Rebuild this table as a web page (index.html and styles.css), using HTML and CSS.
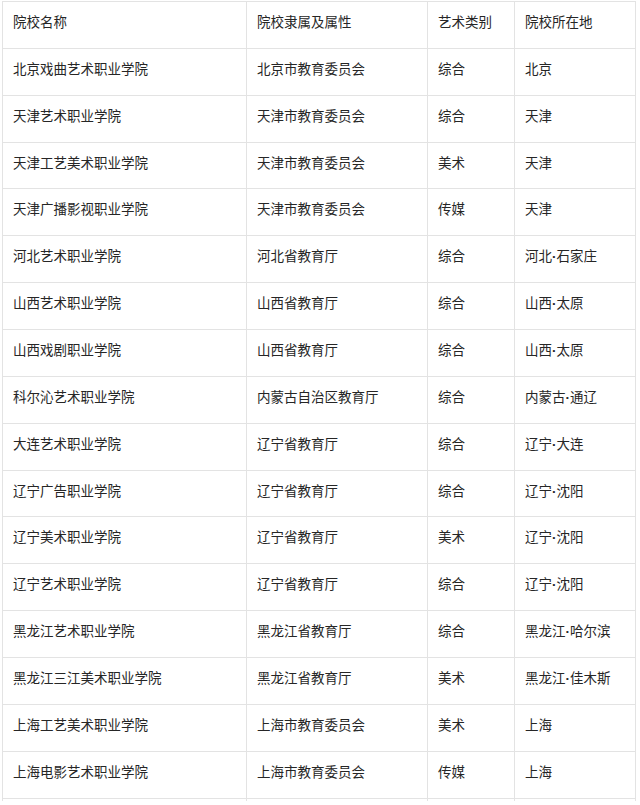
FILE: index.html
```html
<!DOCTYPE html>
<html lang="zh-CN">
<head>
<meta charset="utf-8">
<link rel="stylesheet" href="styles.css">
</head>
<body>
<table class="schools">
<colgroup>
<col class="c1"><col class="c2"><col class="c3"><col class="c4">
</colgroup>
<tbody>
<tr><td>院校名称</td><td>院校隶属及属性</td><td>艺术类别</td><td>院校所在地</td></tr>
<tr><td>北京戏曲艺术职业学院</td><td>北京市教育委员会</td><td>综合</td><td>北京</td></tr>
<tr><td>天津艺术职业学院</td><td>天津市教育委员会</td><td>综合</td><td>天津</td></tr>
<tr><td>天津工艺美术职业学院</td><td>天津市教育委员会</td><td>美术</td><td>天津</td></tr>
<tr><td>天津广播影视职业学院</td><td>天津市教育委员会</td><td>传媒</td><td>天津</td></tr>
<tr><td>河北艺术职业学院</td><td>河北省教育厅</td><td>综合</td><td>河北<span class="dot">·</span>石家庄</td></tr>
<tr><td>山西艺术职业学院</td><td>山西省教育厅</td><td>综合</td><td>山西<span class="dot">·</span>太原</td></tr>
<tr><td>山西戏剧职业学院</td><td>山西省教育厅</td><td>综合</td><td>山西<span class="dot">·</span>太原</td></tr>
<tr><td>科尔沁艺术职业学院</td><td>内蒙古自治区教育厅</td><td>综合</td><td>内蒙古<span class="dot">·</span>通辽</td></tr>
<tr><td>大连艺术职业学院</td><td>辽宁省教育厅</td><td>综合</td><td>辽宁<span class="dot">·</span>大连</td></tr>
<tr><td>辽宁广告职业学院</td><td>辽宁省教育厅</td><td>综合</td><td>辽宁<span class="dot">·</span>沈阳</td></tr>
<tr><td>辽宁美术职业学院</td><td>辽宁省教育厅</td><td>美术</td><td>辽宁<span class="dot">·</span>沈阳</td></tr>
<tr><td>辽宁艺术职业学院</td><td>辽宁省教育厅</td><td>综合</td><td>辽宁<span class="dot">·</span>沈阳</td></tr>
<tr><td>黑龙江艺术职业学院</td><td>黑龙江省教育厅</td><td>综合</td><td>黑龙江<span class="dot">·</span>哈尔滨</td></tr>
<tr><td>黑龙江三江美术职业学院</td><td>黑龙江省教育厅</td><td>美术</td><td>黑龙江<span class="dot">·</span>佳木斯</td></tr>
<tr><td>上海工艺美术职业学院</td><td>上海市教育委员会</td><td>美术</td><td>上海</td></tr>
<tr><td>上海电影艺术职业学院</td><td>上海市教育委员会</td><td>传媒</td><td>上海</td></tr>
<tr class="tail"><td></td><td></td><td></td><td></td></tr>
</tbody>
</table>
</body>
</html>
```
FILE: styles.css
```css
html, body {
  margin: 0;
  padding: 0;
  background: #ffffff;
}
body {
  padding: 1px 0 0 2px;
  font-family: "Noto Sans CJK SC", "Noto Sans", sans-serif;
  font-size: 13.5px;
  color: #262626;
}
.schools {
  border-collapse: collapse;
  table-layout: fixed;
  width: 633px;
}
.c1 { width: 244px; }
.c2 { width: 181px; }
.c3 { width: 87px; }
.c4 { width: 121px; }
.schools td {
  border: 1px solid #e3e3e3;
  height: 46.87px;
  padding: 9px 10px 0 10px;
  box-sizing: border-box;
  vertical-align: top;
  line-height: 20px;
  white-space: nowrap;
}
.schools .tail td {
  height: 3px;
  padding: 0;
  border-bottom: none;
}
.dot {
  font-family: "Liberation Sans", sans-serif;
  font-weight: bold;
}
```
